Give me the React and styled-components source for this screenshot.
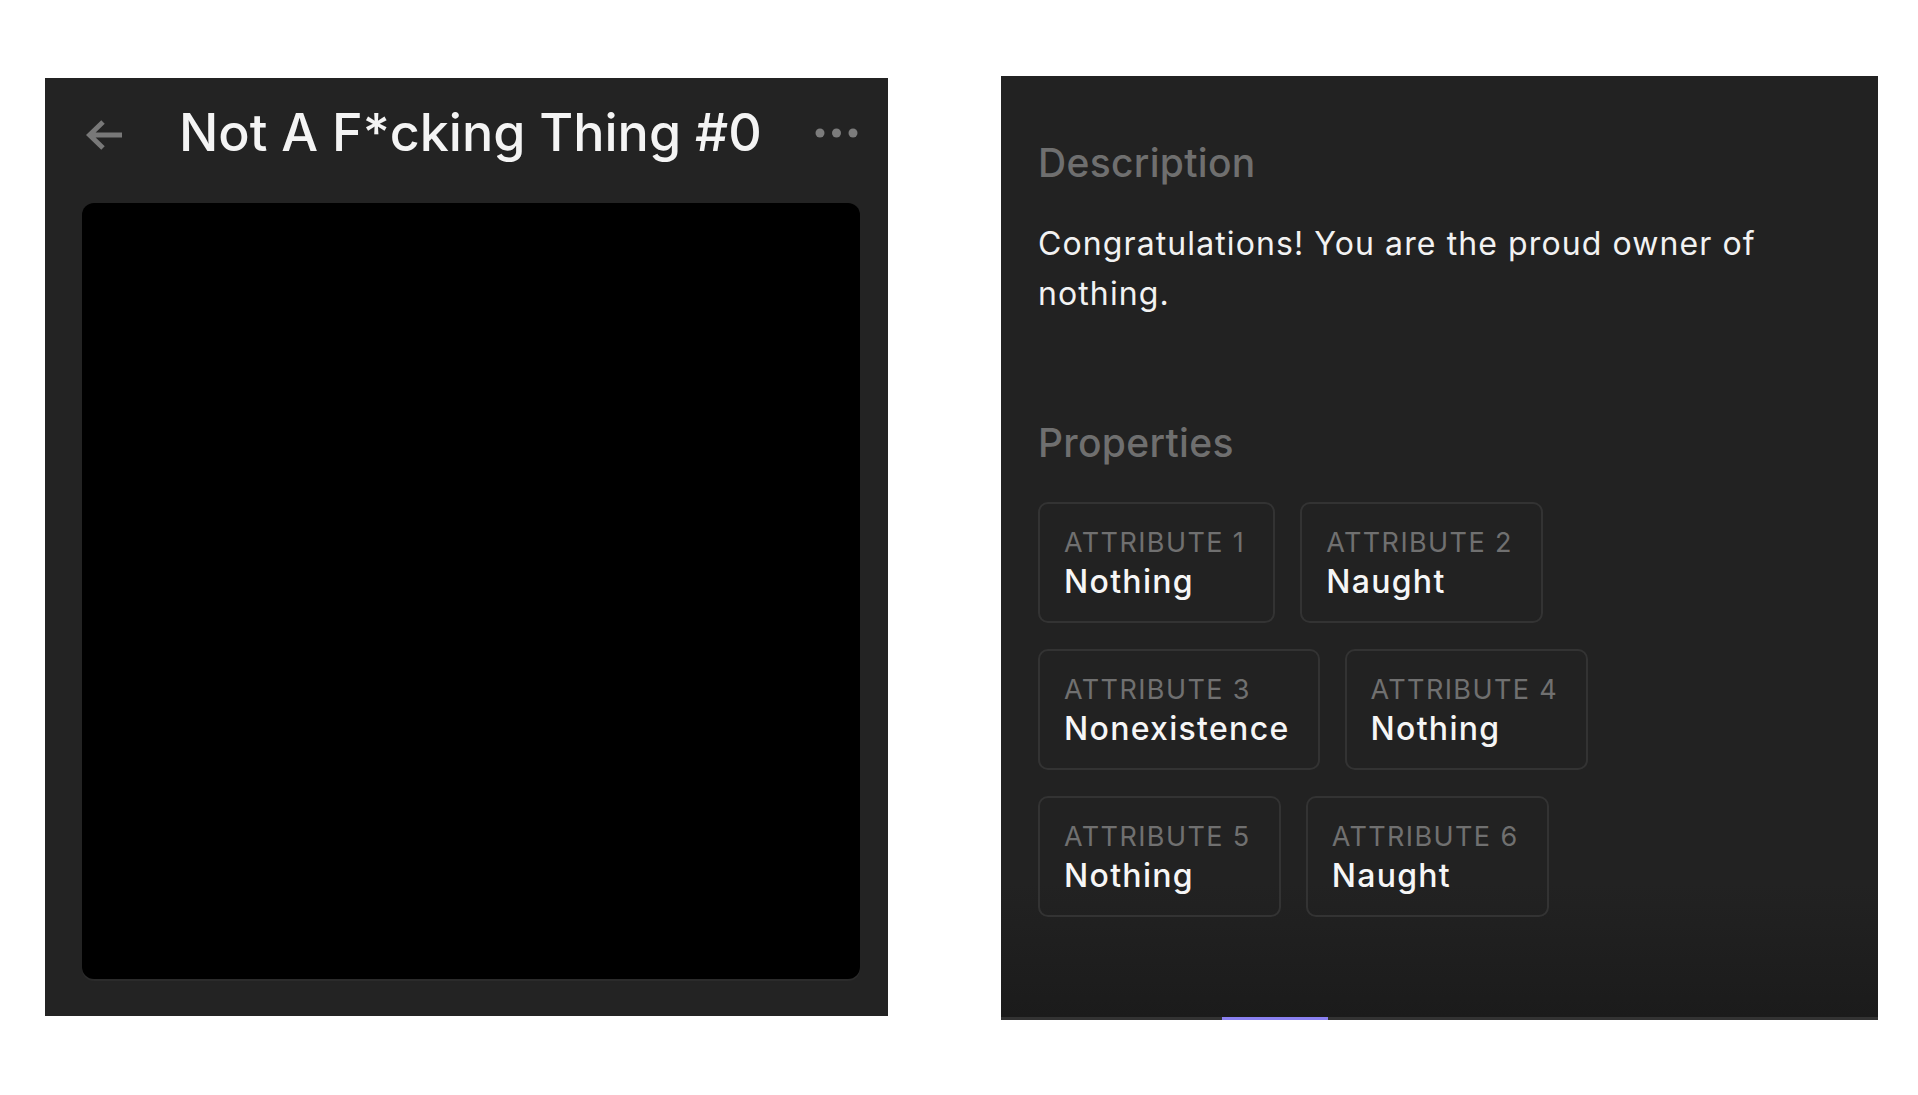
import React from 'react';
import styled, { createGlobalStyle } from 'styled-components';

const GlobalStyle = createGlobalStyle`
  html, body {
    margin: 0;
    padding: 0;
    background: #ffffff;
    font-family: Inter, "Noto Sans", "Liberation Sans", sans-serif;
  }
  * { box-sizing: border-box; }
`;

const attributes = [
  { label: 'Attribute 1', value: 'Nothing' },
  { label: 'Attribute 2', value: 'Naught' },
  { label: 'Attribute 3', value: 'Nonexistence' },
  { label: 'Attribute 4', value: 'Nothing' },
  { label: 'Attribute 5', value: 'Nothing' },
  { label: 'Attribute 6', value: 'Naught' },
];

const App = () => {
  return (
    <>
      <GlobalStyle />
      <Page>
        <TokenPanel>
          <Header>
            <BackArrow width="37" height="32" viewBox="0 0 37 32">
              <path d="M36 16 H4 M17 3 L3.5 16 L17 29" fill="none" stroke="#787878" strokeWidth="5" />
            </BackArrow>
            <Title>Not A F*cking Thing #0</Title>
            <MoreDots width="44" height="12" viewBox="0 0 44 12">
              <circle cx="5" cy="6" r="4.5" fill="#7c7c7c" />
              <circle cx="21.5" cy="6" r="4.5" fill="#7c7c7c" />
              <circle cx="38" cy="6" r="4.5" fill="#7c7c7c" />
            </MoreDots>
          </Header>
          <Artwork />
        </TokenPanel>

        <DetailPanel>
          <DetailBody>
            <SectionTitle>Description</SectionTitle>
            <Description>
              Congratulations! You are the proud owner of nothing.
            </Description>

            <SectionTitle $spaced>Properties</SectionTitle>
            <Traits>
              {attributes.map((a) => (
                <Trait key={a.label}>
                  <TraitLabel>{a.label}</TraitLabel>
                  <TraitValue>{a.value}</TraitValue>
                </Trait>
              ))}
            </Traits>
          </DetailBody>
          <TabTrack>
            <TabIndicator />
          </TabTrack>
        </DetailPanel>
      </Page>
    </>
  );
};

const Page = styled.div`
  display: flex;
  align-items: flex-start;
  gap: 113px;
  padding: 76px 0 0 45px;
`;

const TokenPanel = styled.section`
  margin-top: 2px;
  width: 843px;
  height: 938px;
  background: #232323;
  padding: 24px 28px 0 37px;
  display: flex;
  flex-direction: column;
`;

const Header = styled.div`
  display: flex;
  align-items: center;
  height: 62px;
  padding-left: 4px;
`;

const BackArrow = styled.svg`
  flex: none;
  margin-top: 4px;
`;

const Title = styled.h1`
  flex: 1;
  margin: 0 0 0 56px;
  font-size: 52px;
  line-height: 62px;
  font-weight: 500;
  color: #f4f4f4;
  white-space: nowrap;
`;

const MoreDots = styled.svg`
  flex: none;
  margin-right: 1px;
`;

const Artwork = styled.div`
  margin-top: 39px;
  width: 778px;
  height: 776px;
  background: #000000;
  border-radius: 12px;
  box-shadow: 0 2px 0 #2b2b2b;
`;

const DetailPanel = styled.section`
  width: 877px;
  height: 944px;
  background: #222222;
  display: flex;
  flex-direction: column;
`;

const DetailBody = styled.div`
  flex: 1;
  padding: 64px 38px 0 37px;
  background: linear-gradient(to bottom, #222222 0%, #222222 86%, #1b1b1b 100%);
`;

const SectionTitle = styled.h2`
  margin: ${(p) => (p.$spaced ? '101px' : '0')} 0 0 0;
  font-size: 39px;
  line-height: 46px;
  font-weight: 500;
  letter-spacing: 0.3px;
  color: #6f6f6f;
`;

const Description = styled.p`
  margin: 33px 0 0 0;
  max-width: 790px;
  font-size: 32px;
  line-height: 50px;
  font-weight: 400;
  letter-spacing: 1.1px;
  color: #f2f2f2;
`;

const Traits = styled.div`
  margin-top: 36px;
  max-width: 620px;
  display: flex;
  flex-wrap: wrap;
  column-gap: 25px;
  row-gap: 26px;
`;

const Trait = styled.div`
  border: 2px solid #333333;
  border-radius: 10px;
  padding: 21px 28px 18px 24px;
  display: flex;
  flex-direction: column;
`;

const TraitLabel = styled.span`
  font-size: 27px;
  line-height: 36px;
  font-weight: 400;
  letter-spacing: 1.4px;
  text-transform: uppercase;
  color: #707070;
  white-space: nowrap;
`;

const TraitValue = styled.span`
  font-size: 32px;
  line-height: 42px;
  font-weight: 500;
  letter-spacing: 1.3px;
  color: #f6f6f6;
  white-space: nowrap;
`;

const TabTrack = styled.div`
  height: 3px;
  background: #333333;
  display: flex;
`;

const TabIndicator = styled.div`
  margin-left: 221px;
  width: 106px;
  background: #8a80f0;
`;

export default App;
